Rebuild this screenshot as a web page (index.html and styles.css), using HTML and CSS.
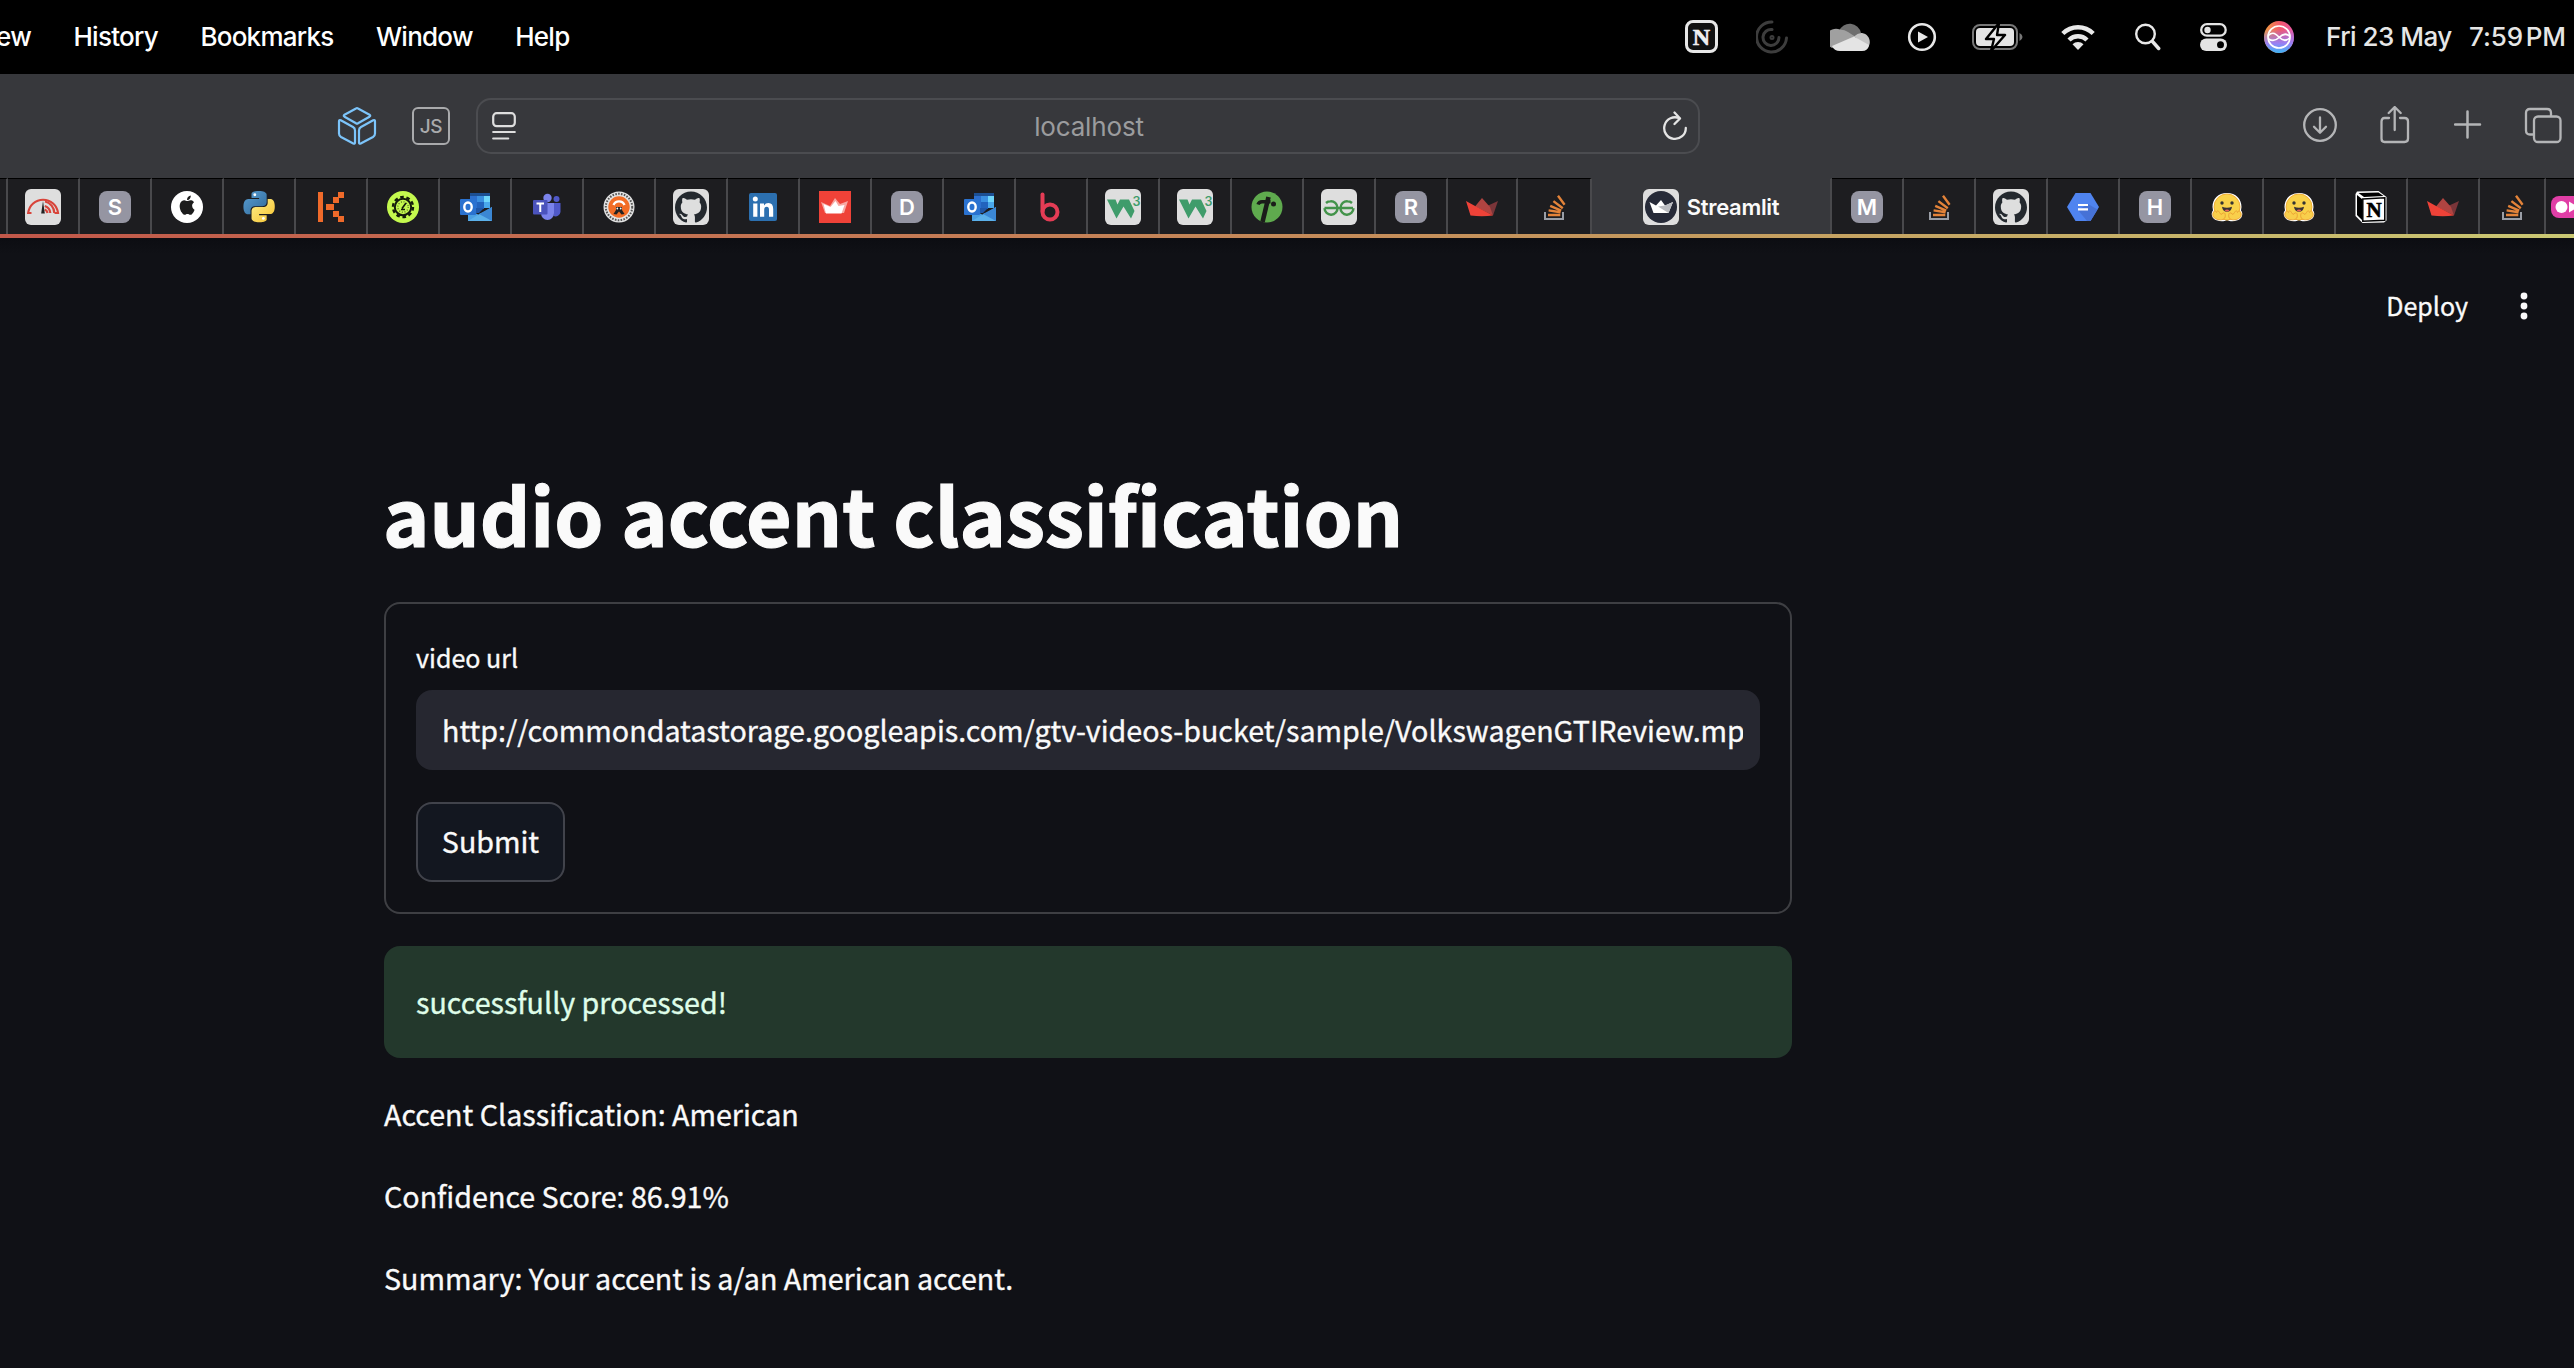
FILE: index.html
```html
<!DOCTYPE html>
<html lang="en">
<head>
<meta charset="utf-8">
<title>Streamlit</title>
<link rel="stylesheet" href="styles.css">
</head>
<body>
<svg class="defs" width="0" height="0" aria-hidden="true">
  <defs>
    <linearGradient id="py-blue" x1="0" y1="0" x2="1" y2="1"><stop offset="0" stop-color="#5a9fd4"/><stop offset="1" stop-color="#306998"/></linearGradient>
    <linearGradient id="py-yellow" x1="0" y1="0" x2="1" y2="1"><stop offset="0" stop-color="#fff08c"/><stop offset="1" stop-color="#f5c22e"/></linearGradient>
    <linearGradient id="siri-warm" x1="0" y1="0" x2="1" y2="0"><stop offset="0" stop-color="#f0a03c"/><stop offset=".55" stop-color="#f4566c"/><stop offset="1" stop-color="#e85aa8"/></linearGradient>
    <linearGradient id="siri-cool" x1="0" y1="0" x2="0" y2="1"><stop offset=".25" stop-color="#8a7cf8" stop-opacity="0"/><stop offset=".7" stop-color="#9a80f4"/><stop offset="1" stop-color="#38b6f4"/></linearGradient>

    <symbol id="github" viewBox="0 0 36 36">
      <rect width="36" height="36" rx="6" fill="#dedede"/>
      <path transform="translate(2 2) scale(1.3333)" fill="#24292f" d="M12 .297c-6.63 0-12 5.373-12 12 0 5.303 3.438 9.8 8.205 11.385.6.113.82-.258.82-.577 0-.285-.01-1.04-.015-2.04-3.338.724-4.042-1.61-4.042-1.61C4.422 18.07 3.633 17.7 3.633 17.7c-1.087-.744.084-.729.084-.729 1.205.084 1.838 1.236 1.838 1.236 1.07 1.835 2.809 1.305 3.495.998.108-.776.417-1.305.76-1.605-2.665-.3-5.466-1.332-5.466-5.93 0-1.31.465-2.38 1.235-3.22-.135-.303-.54-1.523.105-3.176 0 0 1.005-.322 3.3 1.23.96-.267 1.98-.399 3-.405 1.02.006 2.04.138 3 .405 2.28-1.552 3.285-1.23 3.285-1.23.645 1.653.24 2.873.12 3.176.765.84 1.23 1.91 1.23 3.22 0 4.61-2.805 5.625-5.475 5.92.42.36.81 1.096.81 2.22 0 1.606-.015 2.896-.015 3.286 0 .315.21.69.825.57C20.565 22.092 24 17.592 24 12.297c0-6.627-5.373-12-12-12"/>
    </symbol>
    <symbol id="outlook" viewBox="0 0 36 36">
      <path fill="#1c4f93" d="M13 4h20v6H13z"/>
      <path fill="#2c6fce" d="M13 7h7v12h-7z"/>
      <path fill="#3a8fe0" d="M20 7h7v6h-7z"/><path fill="#6fd6fb" d="M27 7h6v6h-6z"/>
      <path fill="#2263bd" d="M20 13h7v7h-7z"/><path fill="#4aa8ec" d="M27 13h6v6h-6z"/>
      <path fill="#1f57a8" d="M13 19h14l-5 5h-9z"/>
      <path fill="#4a9fe2" d="M35 18v14H11V20l11 6z"/>
      <path fill="#5bb0ea" d="M11 32l13-8 11 8z"/><path fill="#3b87d4" d="M35 18v14L22 25z"/>
      <rect x="3" y="10" width="16" height="16" rx="1" fill="#2a72d0"/>
      <ellipse cx="11" cy="18" rx="3.7" ry="4.5" fill="none" stroke="#fff" stroke-width="2.4"/>
    </symbol>
    <symbol id="stack" viewBox="0 0 36 36">
      <path fill="none" stroke="#9a9ea6" stroke-width="2" d="M9 23v7h18v-7"/>
      <path fill="none" stroke="#e38339" stroke-width="2.4" d="M12 26h12.3M12.6 21.4l12 1.9M14.2 16.9l11 4.7M17.4 12.1l9.4 7.1M22 6.8l6.6 8.9"/>
    </symbol>
    <symbol id="crown" viewBox="0 0 36 36">
      <path fill="#7a3539" d="M34 12l-5 14.5-7-9z"/>
      <path fill="#b04441" d="M18 9l8 9 3 8.500-18-9z"/>
      <path fill="#ee4238" d="M2 12l10 5.500 17 9q-11 1.400-22.500 0z"/>
    </symbol>
    <symbol id="w3" viewBox="0 0 36 36">
      <rect width="36" height="36" rx="6" fill="#dedede"/>
      <path fill="#3f9c6b" d="M2 10.500h8.500l2 5 2.500-5h9l5.500 11.500-3.500 7.500-7.500-12-7 12z"/>
      <text x="27.500" y="17" font-family="Inter, sans-serif" font-size="12.500" font-weight="600" fill="#3f9c6b">3</text>
    </symbol>
    <symbol id="hug" viewBox="0 0 36 36">
      <path fill="#fff" d="M18 4c9 0 14.500 6 14.500 14l-.5 3.500c3 3 .5 9-3.500 9.800-4 1.600-8 1.200-10.500-.3-2.500 1.500-6.500 1.900-10.500.3-4-.8-6.500-6.800-3.500-9.800L3.500 18C3.500 10 9 4 18 4z"/>
      <circle cx="18" cy="18" r="13" fill="#f9d24a" stroke="#f1ae35"/>
      <circle cx="13" cy="14" r="1.700" fill="#343434"/><circle cx="23" cy="14" r="1.700" fill="#343434"/>
      <path fill="#3a3335" d="M13 17.800q5 2 10 0-.7 5-5 5t-5-5z"/><path fill="#e8635b" d="M15.500 21.300q2.500-1.400 5 0-2.500 2.400-5 0z"/>
      <path fill="#f9cf4b" stroke="#eda536" d="M4.500 23c1-2 2.500-.5 3 .5 0-2 2-2.200 3 0l1.500 2 2-1.500c2.500-1 2.800 3 1.800 5-2 2.500-7 2-9 .8-2.500-1-4-3.800-2.300-6.800zM31.500 23c-1-2-2.500-.5-3 .5 0-2-2-2.200-3 0l-1.500 2-2-1.500c-2.500-1-2.800 3-1.800 5 2 2.500 7 2 9 .8 2.500-1 4-3.800 2.300-6.800z"/>
    </symbol>
  </defs>
</svg>

<header class="menubar">
  <nav class="menus"><span class="m-view">ew</span><span>History</span><span>Bookmarks</span><span>Window</span><span>Help</span></nav>
  <div class="status">
    <svg class="s-notion" viewBox="0 0 34 34" width="34" height="34"><rect x="1.500" y="1.500" width="30" height="30" rx="6.500" fill="#111" stroke="#e8e8e8" stroke-width="3"/><text x="16.500" y="24.500" text-anchor="middle" font-family="Liberation Serif, serif" font-weight="700" font-size="24" fill="#f0f0f0" stroke="#f0f0f0" stroke-width=".6">N</text></svg>
    <svg class="s-spiral" viewBox="0 0 32 34" width="32" height="34" fill="none" stroke="#3d3d3d" stroke-width="3" stroke-linecap="round"><path d="M16 2a15 15 0 1 0 14.500 16"/><path d="M16 9.500a8 8 0 1 0 7 8"/><circle cx="16" cy="17.500" r="1"/></svg>
    <svg class="s-cloud" viewBox="0 0 40 28" width="40" height="28"><path fill="#6f6f6f" d="M9 8a11.500 11.500 0 0 1 22 2l-7 5z"/><path fill="#a0a0a0" d="M10 6.500q5 0 8 2.500l7 4.500L2 25a10 10 0 0 1 8-18.500z"/><path fill="#c4c4c4" d="M24 13.500q4-4 8-3.500c7 1 10 9 6 14.500z"/><path fill="#e4e4e4" d="M24 13.500L39 22q-1 6-7 6H10q-6 0-8-5z"/></svg>
    <svg class="s-play" viewBox="0 0 30 30" width="30" height="30"><circle cx="15" cy="15" r="12.800" fill="none" stroke="#e8e8e8" stroke-width="2.600"/><path fill="#e8e8e8" d="M11 9.500v11l10-5.500z"/></svg>
    <svg class="s-batt" viewBox="0 0 51 28" width="51" height="28"><rect x="1" y="2" width="44" height="24" rx="7" fill="none" stroke="#777" stroke-width="2"/><rect x="4" y="5" width="38" height="18" rx="4" fill="#e4e4e4"/><path fill="#777" d="M47.500 10q3 1.500 3 4t-3 4z"/><path fill="#e8e8e8" stroke="#000" stroke-width="2.400" stroke-linejoin="round" d="M27 0L14 16h8l-3 12L33 12h-8z"/></svg>
    <svg class="s-wifi" viewBox="0 0 34 28" width="34" height="28" fill="none" stroke="#e8e8e8" stroke-width="4.400"><path d="M1.800 10.500a21.500 21.500 0 0 1 30.400 0"/><path d="M8 17a12.700 12.700 0 0 1 18 0"/><path fill="#e8e8e8" stroke="none" d="M11.500 21.300a8 8 0 0 1 11 0L17 27z"/></svg>
    <svg class="s-search" viewBox="0 0 26 28" width="26" height="28" fill="none" stroke="#e8e8e8"><circle cx="10.500" cy="11" r="9.300" stroke-width="2.400"/><path stroke-width="3.400" stroke-linecap="round" d="M17.500 18.500l6.200 7"/></svg>
    <svg class="s-ctl" viewBox="0 0 27 30" width="27" height="30"><rect x="1.200" y="2.200" width="24.500" height="11.500" rx="5.700" fill="none" stroke="#e4e4e4" stroke-width="2.300"/><circle cx="7.500" cy="8" r="3.200" fill="#e4e4e4"/><rect y="16.500" width="27" height="12.500" rx="6.200" fill="#e4e4e4"/><circle cx="20.500" cy="22.700" r="3.500" fill="#000"/></svg>
    <svg class="s-siri" viewBox="0 0 30 32" width="30" height="32"><ellipse cx="15" cy="16" rx="15" ry="16" fill="url(#siri-warm)"/><ellipse cx="15" cy="16" rx="15" ry="16" fill="url(#siri-cool)"/><g fill="none" stroke="#fff" stroke-width="1.700"><circle cx="15" cy="16" r="11"/><path d="M4.300 14.500C9 10 12 13 15.500 16.500s7 3.500 10 .5M4.500 18c4 2.500 7.500 1.500 10.500-1.500s7-4.500 10.500-1.500"/></g></svg>
    <span class="date">Fri 23 May</span><span class="time">7:59 PM</span>
  </div>
</header>

<div class="toolbar">
  <svg class="t-cube" viewBox="0 0 40 40" width="40" height="40" fill="none" stroke="#7cc4fa" stroke-width="2.200" stroke-linejoin="round"><path d="M19 2.500q1-.8 2 0l11.500 6.200q1.500 1 0 2L21 17.300q-1 .7-2 0L7.500 10.700q-1.500-1 0-2z"/><path d="M2 15.500q0-2 1.800-1.200L16 21q2 1.200 2 3.500v12q0 1.800-1.700 1L4 31q-2-1.200-2-3.500z"/><path d="M38 15.500q0-2-1.800-1.200L24 21q-2 1.200-2 3.500v12q0 1.800 1.700 1L36 31q2-1.200 2-3.500z"/></svg>
  <span class="t-js">JS</span>
  <div class="address">
    <svg viewBox="0 0 24 28" width="24" height="28" fill="none" stroke="#dedede" stroke-width="2.200" stroke-linecap="round"><rect x="1.200" y="1.200" width="21.600" height="13" rx="3.500"/><path d="M1.200 20h21.600M1.200 26.500h15"/></svg>
    <span class="host">localhost</span>
    <svg viewBox="0 0 24 30" width="24" height="30" fill="none" stroke="#e4e4e4" stroke-width="2.300" stroke-linecap="round" stroke-linejoin="round"><path d="M16.500 7.300A10.800 10.800 0 1 0 22.800 17"/><path d="M11.500 1.500l5.500 6-5.500 5.500"/></svg>
  </div>
  <div class="actions">
    <svg viewBox="0 0 36 36" width="36" height="36" fill="none" stroke="#b4b5b7" stroke-width="2.300" stroke-linecap="round" stroke-linejoin="round"><circle cx="18" cy="17" r="15.800"/><path d="M18 9.500v15M12 18.800l6 6 6-6"/></svg>
    <svg viewBox="0 0 32 40" width="32" height="40" fill="none" stroke="#b4b5b7" stroke-width="2.300" stroke-linecap="round" stroke-linejoin="round"><path d="M9 12H4.500Q1.500 12 1.500 15.500v17Q1.500 36 4.500 36h20q3.500 0 3.500-3.500v-17Q28 12 24.500 12H20M14.700 24V1.500M8.700 7l6-6 6 6"/></svg>
    <svg viewBox="0 0 28 36" width="28" height="36" fill="none" stroke="#b4b5b7" stroke-width="2.500" stroke-linecap="round"><path d="M13.500 3.500v26M1 16.500h25"/></svg>
    <svg viewBox="0 0 38 38" width="38" height="38" fill="none" stroke="#b4b5b7" stroke-width="2.300"><path d="M10 27.500H6Q2 27.500 2 23.500V6q0-4 4-4h17q4 0 4 4v3.500"/><rect x="10" y="9.500" width="26.500" height="25.500" rx="4"/></svg>
  </div>
</div>

<div class="tabs">
  <div class="tab edge"></div>
  <div class="tab"><svg viewBox="0 0 36 36"><rect width="36" height="36" rx="6" fill="#dedede"/><g fill="none" stroke="#d8443a" stroke-width="2.200"><path d="M6.500 24H3.200a15 15 0 0 1 29.800 0h-3.500"/><path d="M20 12.500A12 12 0 0 1 29.300 24M19.800 17a8 8 0 0 1 5.500 7M19.800 20.500q2.300 1 2.700 3.500"/></g><path fill="#222" d="M18 12l1.800 12.500h-3.600z"/></svg></div>
  <div class="tab"><span class="letter">S</span></div>
  <div class="tab"><svg viewBox="0 0 36 36"><circle cx="18" cy="18" r="16" fill="#fff"/><path transform="translate(9 6.600) scale(.76 .8)" fill="#1c1c1c" d="M12.152 6.896c-.948 0-2.415-1.078-3.960-1.040-2.040.027-3.910 1.183-4.961 3.014-2.117 3.675-.546 9.103 1.519 12.090 1.013 1.454 2.208 3.090 3.792 3.039 1.520-.065 2.090-.987 3.935-.987 1.831 0 2.350.987 3.960.948 1.637-.026 2.676-1.480 3.676-2.948 1.156-1.688 1.636-3.325 1.662-3.415-.039-.013-3.182-1.221-3.220-4.857-.026-3.040 2.480-4.494 2.597-4.559-1.429-2.090-3.623-2.324-4.390-2.376-2-.156-3.675 1.090-4.610 1.090zM15.530 3.830c.843-1.012 1.400-2.427 1.245-3.830-1.207.052-2.662.805-3.532 1.818-.780.896-1.454 2.338-1.273 3.714 1.338.104 2.715-.688 3.559-1.701"/></svg></div>
  <div class="tab"><svg viewBox="0 0 36 36"><g transform="translate(2.500 2) scale(1.300)"><path fill="url(#py-blue)" d="M14.250.18l.9.2.73.26.59.3.45.32.34.34.25.34.16.33.1.3.04.26.02.2-.01.13V8.500l-.05.63-.13.55-.21.46-.26.38-.3.31-.33.25-.35.19-.35.14-.33.1-.3.07-.26.04-.21.02H8.770l-.69.05-.59.14-.5.22-.41.27-.33.32-.27.35-.2.36-.15.37-.1.35-.07.32-.04.27-.02.21v3.060H3.170l-.21-.03-.28-.07-.32-.12-.35-.18-.36-.26-.36-.36-.35-.46-.32-.59-.28-.73-.21-.88-.14-1.050-.05-1.230.06-1.220.16-1.040.24-.87.32-.71.36-.57.4-.44.42-.33.42-.24.4-.16.36-.1.32-.05.24-.01h.16l.06.01h8.160v-.83H6.180l-.01-2.750-.02-.37.05-.34.11-.31.17-.28.25-.26.31-.23.38-.2.44-.18.51-.15.58-.12.64-.1.71-.06.77-.04.84-.02 1.270.05z"/><path fill="url(#py-yellow)" d="M21.040 6.110l.28.06.32.12.35.18.36.27.36.35.35.47.32.59.28.73.21.88.14 1.040.05 1.230-.06 1.230-.16 1.040-.24.86-.32.71-.36.57-.4.45-.42.33-.42.24-.4.16-.36.09-.32.05-.24.02-.16-.01h-8.220v.82h5.840l.01 2.760.02.36-.05.34-.11.31-.17.29-.25.25-.31.24-.38.2-.44.17-.51.15-.58.13-.64.09-.71.07-.77.04-.84.01-1.270-.04-1.070-.14-.9-.2-.73-.25-.59-.3-.45-.33-.34-.34-.25-.34-.16-.33-.1-.3-.04-.25-.02-.2.01-.13v-5.340l.05-.64.13-.54.21-.46.26-.38.3-.32.33-.24.35-.2.35-.14.33-.1.3-.06.26-.04.21-.02.13-.01h5.840l.69-.05.59-.14.5-.21.41-.28.33-.32.27-.35.2-.36.15-.36.1-.35.07-.32.04-.28.02-.21V6.070h2.090l.14.01z"/><circle cx="8.700" cy="2.900" r="1.100" fill="#fff"/><circle cx="15.300" cy="21.100" r="1.100" fill="#fff"/></g></svg></div>
  <div class="tab"><svg viewBox="0 0 36 36" fill="#ef6a2a"><path d="M5 3h5v30H5zM25 3h6v6h-6zM20 8h6v6h-6zM13 15h8v6h-8zM20 22h6v6h-6zM25 27h6v6h-6z"/></svg></div>
  <div class="tab"><svg viewBox="0 0 36 36"><circle cx="18" cy="18" r="16" fill="#c4f94e"/><circle cx="18" cy="18" r="10" fill="none" stroke="#151b0c" stroke-width="2.400" stroke-dasharray="3.600 2.683"/><circle cx="18" cy="18" r="8.200" fill="none" stroke="#151b0c" stroke-width="2"/><circle cx="18" cy="18" r="5.200" fill="none" stroke="#50691f" stroke-width="1.200" stroke-dasharray="1 1.720"/><path stroke="#151b0c" stroke-width="1.600" d="M17 19.500l4-5.500M16 20.500h4"/></svg></div>
  <div class="tab"><svg><use href="#outlook"/></svg></div>
  <div class="tab"><svg viewBox="0 0 36 36"><circle cx="18.500" cy="9" r="4.200" fill="#7b83eb"/><circle cx="27.500" cy="10" r="3" fill="#5059c9"/><path fill="#5059c9" d="M23 14h8.500v9a5 5 0 0 1-7 4z"/><path fill="#7b83eb" d="M12 14h13v10a6.500 7 0 0 1-13 0z"/><rect x="4" y="11" width="14.500" height="14.500" rx="1" fill="#4b53bc"/><path stroke="#fff" stroke-width="2" d="M7.500 14.500h7.500M11.250 14.500v8.500"/></svg></div>
  <div class="tab"><svg viewBox="0 0 36 36"><circle cx="18" cy="18" r="15.500" fill="#e4e4e4"/><circle cx="18" cy="18" r="13.200" fill="none" stroke="#555" stroke-width="2" stroke-dasharray="1.600 1.300"/><circle cx="18" cy="18" r="10.700" fill="#f26d26"/><path d="M12.500 16a6 6 0 0 1 11 0" fill="none" stroke="#fff" stroke-width="2.400"/><path fill="#222" d="M15 18h6v3l2.500 4-3 .5-2.500-3-2.500 3-3-.5 2.500-4z"/><circle cx="16.300" cy="19.500" r=".9" fill="#fff"/><circle cx="19.700" cy="19.500" r=".9" fill="#fff"/></svg></div>
  <div class="tab"><svg><use href="#github"/></svg></div>
  <div class="tab"><svg viewBox="0 0 36 36"><rect x="4" y="4" width="28" height="28" rx="2" fill="#2c70b0"/><path fill="#fff" d="M8.200 14.500h4.200v13.300H8.200zM15 14.500h4v2q1.500-2.400 4.500-2.400 4.700 0 4.700 6v7.700H24V21q0-3.200-2.300-3.200-2.500 0-2.500 3.200v6.800H15z"/><circle cx="10.300" cy="10" r="2.500" fill="#fff"/></svg></div>
  <div class="tab"><svg viewBox="0 0 36 36"><path fill="#ef4238" d="M2 2h32v32H2z"/><path fill="#f8a8a2" d="M4 13l9 4 5-8 5 6 8-3-4 12H8z"/><path fill="#fff" d="M6.500 15l7 3 5-6 3 5 6-1-3 8.500H9z"/></svg></div>
  <div class="tab"><span class="letter">D</span></div>
  <div class="tab"><svg><use href="#outlook"/></svg></div>
  <div class="tab"><svg viewBox="0 0 36 36" fill="none" stroke="#e43c55" stroke-width="4" stroke-linecap="round"><path d="M9.500 5.500V22"/><circle cx="17" cy="23" r="7.500"/></svg></div>
  <div class="tab"><svg><use href="#w3"/></svg></div>
  <div class="tab"><svg><use href="#w3"/></svg></div>
  <div class="tab"><svg viewBox="0 0 36 36"><circle cx="18" cy="18" r="15.500" fill="#5faa4e"/><path fill="none" stroke="#1b1d1a" stroke-width="4.600" d="M19.500 8l-6 25"/><path fill="none" stroke="#1b1d1a" stroke-width="3.400" d="M9 15.500q1-2.700 4-2.700h8.500"/><circle cx="24.500" cy="15" r="2.500" fill="#1b1d1a"/></svg></div>
  <div class="tab"><svg viewBox="0 0 36 36"><rect width="36" height="36" rx="6" fill="#dedede"/><path fill="none" stroke="#43934a" stroke-width="2.400" d="M3.500 19H32M5 14q2-1.800 4.500-1.800a6.500 6.800 0 1 1-6 7M31 14q-2-1.800-4.500-1.800a6.500 6.800 0 1 0 6 7"/></svg></div>
  <div class="tab"><span class="letter">R</span></div>
  <div class="tab narrow"><svg><use href="#crown"/></svg></div>
  <div class="tab wide"><svg><use href="#stack"/></svg></div>
  <div class="tab active"><svg viewBox="0 0 36 36"><rect width="36" height="36" rx="6" fill="#dedede"/><circle cx="18" cy="18" r="16" fill="#262a38"/><path fill="#fff" d="M6.500 13l6.500 3.500 5-5.500 4 5.500 8-3.500-4.500 11H10.500z"/><path fill="#b9bbc0" d="M30 13l-4.500 11L15 17.500l7-1z"/></svg><span>Streamlit</span></div>
  <div class="tab first"><span class="letter">M</span></div>
  <div class="tab"><svg><use href="#stack"/></svg></div>
  <div class="tab"><svg><use href="#github"/></svg></div>
  <div class="tab"><svg viewBox="0 0 36 36"><path fill="#4f84f0" d="M10.500 4h15L34 18l-8.500 14h-15L2 18z"/><path fill="#4672d6" d="M23 15l9.500 5.500-7 11.500H22l-9-11z"/><path stroke="#fff" stroke-width="2.200" d="M13 16h10M13 20.300h10"/></svg></div>
  <div class="tab"><span class="letter">H</span></div>
  <div class="tab"><svg><use href="#hug"/></svg></div>
  <div class="tab"><svg><use href="#hug"/></svg></div>
  <div class="tab"><svg viewBox="0 0 36 36"><path fill="#fff" d="M4 2.500L25.500 2 33.500 8v23.500L31 33.500 9.500 34 2.500 27V5z"/><path fill="#000" d="M5.500 4l20-.5 5 3.500-19.500 1z"/><path fill="#000" d="M4 6l5 4v21l-5-5z"/><path fill="#fff" stroke="#000" stroke-width="1.500" d="M9.800 10l22-1.300v22.500L9.800 32.300z"/><text x="21" y="27.500" text-anchor="middle" font-family="Liberation Serif, serif" font-size="21" font-weight="700" stroke="#000" stroke-width=".6">N</text></svg></div>
  <div class="tab"><svg><use href="#crown"/></svg></div>
  <div class="tab short"><svg><use href="#stack"/></svg></div>
  <div class="tab last"><svg viewBox="0 0 36 36"><rect x="0" y="7" width="48" height="22" rx="8" fill="#e03ea6"/><circle cx="10.500" cy="18" r="6" fill="#fff"/><path fill="#fff" d="M18 12.500v11l9-5.500z"/></svg></div>
</div>
<div class="tabline"></div>

<main class="app">
  <div class="app-bar"><span class="deploy">Deploy</span><svg viewBox="0 0 8 32" width="8" height="32" fill="#fafafa"><circle cx="4" cy="6" r="3.400"/><circle cx="4" cy="16" r="3.400"/><circle cx="4" cy="26" r="3.400"/></svg></div>
  <div class="block">
    <h1>audio accent classification</h1>
    <section class="form">
      <div class="label">video url</div>
      <div class="input"><div class="value">http://commondatastorage.googleapis.com/gtv-videos-bucket/sample/VolkswagenGTIReview.mp</div></div>
      <button class="submit">Submit</button>
    </section>
    <div class="alert">successfully processed!</div>
    <p>Accent Classification: American</p>
    <p>Confidence Score: 86.91%</p>
    <p>Summary: Your accent is a/an American accent.</p>
  </div>
</main>
</body>
</html>
```
FILE: styles.css
```css
* { box-sizing: border-box; }
body {
  margin: 0;
  width: 2574px;
  height: 1368px;
  overflow: hidden;
  background: #101116;
  color: #fafafa;
  font-family: "Noto Sans CJK SC", "Noto Sans", sans-serif;
}
svg { display: block; flex: none; }
.defs { position: absolute; }

.menubar {
  height: 74px;
  background: #000;
  color: #fff;
  display: flex;
  justify-content: space-between;
  align-items: center;
  font: 500 26px/30px Inter, sans-serif;
  white-space: pre;
}
.menus { display: flex; gap: 42.5px; letter-spacing: -.75px; }
.m-view { width: 31px; display: flex; justify-content: flex-end; }
.status { display: flex; align-items: center; padding-right: 8px; color: #e6e6e6; }
.s-notion { margin-right: 1px; }
.s-spiral { margin-left: 36px; }
.s-cloud { margin: 0 37px 0 42px; }
.s-batt { margin-left: 35px; }
.s-wifi { margin-left: 38px; }
.s-search { margin-left: 40px; }
.s-ctl { margin-left: 39px; }
.s-siri { margin-left: 37px; }
.date { width: 129px; margin-left: 32px; letter-spacing: -.5px; }
.time { width: 97px; margin-left: 14px; word-spacing: -4px; letter-spacing: -.1px; }

.toolbar {
  height: 104px;
  background: #37383c;
  display: flex;
  align-items: center;
  padding-left: 337px;
}
.t-js {
  width: 38px;
  height: 38px;
  margin: 0 26px 0 35px;
  border: 2px solid #a9aaac;
  border-radius: 6px;
  color: #a9aaac;
  font: 500 19px/35px Inter, sans-serif;
  letter-spacing: -.4px;
  text-align: center;
}
.address {
  width: 1224px;
  height: 56px;
  border: 2px solid #4b4c50;
  border-radius: 15px;
  display: flex;
  align-items: center;
  justify-content: space-between;
  padding: 0 11px 0 14px;
}
.host { color: #9b9c9e; font: 400 26px Inter, sans-serif; letter-spacing: -.15px; margin-right: 1px; }
.actions { display: flex; align-items: center; margin-left: 602px; gap: 42px; }

.tabs { height: 56px; display: flex; background: #1d1d20; }
.tab {
  width: 72px;
  flex: none;
  border-right: 2px solid #49494c;
  border-top: 1px solid #000;
  display: flex;
  align-items: center;
  justify-content: center;
  padding-top: 1px;
}
.tab svg { width: 36px; height: 36px; }
.edge { width: 8px; }
.narrow { width: 70px; }
.wide { width: 74px; }
.active {
  width: 240px;
  border-top-color: #37383c;
  background: #37383c;
  gap: 8px;
  font: 600 22px/26px Inter, sans-serif;
  letter-spacing: -.3px;
}
.active span { padding-bottom: 1px; }
.first { width: 72px; }
.short { width: 66px; }
.last { width: 28px; border-right: 0; justify-content: flex-start; padding-left: 5px; overflow: hidden; }
.letter {
  width: 32px;
  height: 32px;
  border-radius: 8px;
  background: #9595a2;
  color: #fff;
  font: 600 22px/33px Inter, sans-serif;
  text-align: center;
}
.tabline { height: 4px; background: linear-gradient(90deg, #c2584a, #c57f56 40%, #c49a5e 65%, #cac873); }

.app { height: 1130px; background: linear-gradient(#0c0d12, #101116 16px); -webkit-text-stroke: .35px currentColor; }
.app-bar { height: 136px; display: flex; align-items: center; justify-content: flex-end; gap: 52px; padding-right: 46px; }
.deploy { font-size: 25px; line-height: 36px; padding-bottom: 3px; }
.block { width: 1408px; margin-left: 384px; }
h1 { margin: 86px 0 0 -1px; height: 142px; font-size: 78.7px; font-weight: 700; line-height: 106px; white-space: nowrap; -webkit-text-stroke: 1.2px currentColor; }
.form { height: 312px; border: 2px solid #3e3f43; border-radius: 16px; padding: 30px; }
.label { height: 56px; font-size: 25px; line-height: 46px; }
.input { height: 80px; background: #262730; border-radius: 16px; padding: 0 17px 0 26px; }
.value { overflow: hidden; white-space: nowrap; font-size: 28.65px; line-height: 79px; }
.submit {
  display: block;
  width: 149px;
  height: 80px;
  margin-top: 32px;
  padding: 0 0 2px;
  border: 2px solid #41434b;
  border-radius: 16px;
  background: #131720;
  color: #fafafa;
  font: 400 28.65px/72px "Noto Sans CJK SC", sans-serif;
  -webkit-text-stroke: .35px currentColor;
}
.alert { height: 112px; margin-top: 32px; padding-left: 32px; border-radius: 16px; background: #23382c; color: #dffde9; font-size: 28.65px; line-height: 111px; }
p { margin: 32px 0 0; font-size: 28.65px; line-height: 50px; }
.alert + p { margin-top: 31px; }
```
